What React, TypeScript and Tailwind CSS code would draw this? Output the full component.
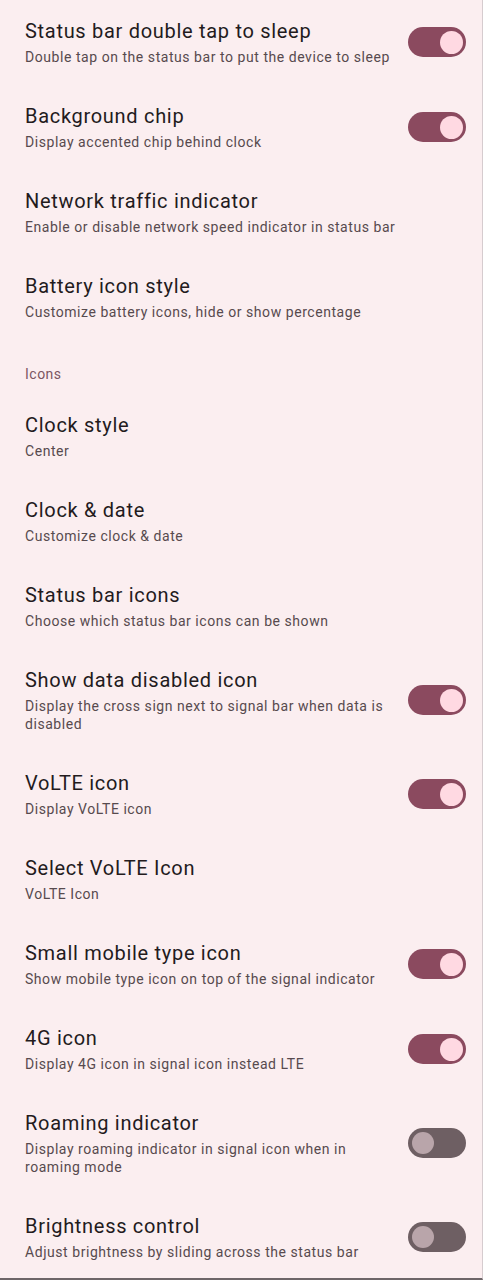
import React from "react";

type Row = {
  title: string;
  summary: string;
  toggle?: "on" | "off";
};

const topRows: Row[] = [
  { title: "Status bar double tap to sleep", summary: "Double tap on the status bar to put the device to sleep", toggle: "on" },
  { title: "Background chip", summary: "Display accented chip behind clock", toggle: "on" },
  { title: "Network traffic indicator", summary: "Enable or disable network speed indicator in status bar" },
  { title: "Battery icon style", summary: "Customize battery icons, hide or show percentage" },
];

const iconRows: Row[] = [
  { title: "Clock style", summary: "Center" },
  { title: "Clock & date", summary: "Customize clock & date" },
  { title: "Status bar icons", summary: "Choose which status bar icons can be shown" },
  { title: "Show data disabled icon", summary: "Display the cross sign next to signal bar when data is disabled", toggle: "on" },
  { title: "VoLTE icon", summary: "Display VoLTE icon", toggle: "on" },
  { title: "Select VoLTE Icon", summary: "VoLTE Icon" },
  { title: "Small mobile type icon", summary: "Show mobile type icon on top of the signal indicator", toggle: "on" },
  { title: "4G icon", summary: "Display 4G icon in signal icon instead LTE", toggle: "on" },
  { title: "Roaming indicator", summary: "Display roaming indicator in signal icon when in roaming mode", toggle: "off" },
  { title: "Brightness control", summary: "Adjust brightness by sliding across the status bar", toggle: "off" },
];

function Switch({ on }: { on: boolean }) {
  if (on) {
    return (
      <div className="flex h-[30px] w-[58px] shrink-0 items-center justify-end rounded-full bg-[#8b4a5f] pr-[3px]">
        <div className="h-[23px] w-[23px] rounded-full bg-[#ffd9e2]" />
      </div>
    );
  }
  return (
    <div className="flex h-[30px] w-[58px] shrink-0 items-center justify-start rounded-full bg-[#6e5f63] pl-[4px]">
      <div className="h-[22px] w-[22px] rounded-full bg-[#b9a5aa]" />
    </div>
  );
}

function PrefRow({ row }: { row: Row }) {
  return (
    <div className="flex items-center gap-4 pb-[19px] pl-[25px] pr-[16px] pt-[18px]">
      <div className="min-w-0 flex-1">
        <div className="text-[20px] leading-[26px] tracking-[0.7px] text-[#231b1d]">{row.title}</div>
        <div className="mt-1 text-[14px] leading-[18px] tracking-[0.55px] text-[#574a4e]">{row.summary}</div>
      </div>
      {row.toggle && <Switch on={row.toggle === "on"} />}
    </div>
  );
}

export default function App() {
  return (
    <div
      className="h-[1280px] w-[483px] overflow-hidden border-b-2 border-r border-b-[#6d6568] border-r-[#d6cccf] bg-[#fbeef0]"
      style={{ fontFamily: "Roboto, 'Noto Sans', sans-serif" }}
    >
      {topRows.map((row) => (
        <PrefRow key={row.title} row={row} />
      ))}
      <div className="pb-2.5 pl-[25px] pt-6 text-[14px] leading-[20px] tracking-[0.5px] text-[#7b5662]">Icons</div>
      {iconRows.map((row) => (
        <PrefRow key={row.title} row={row} />
      ))}
    </div>
  );
}
